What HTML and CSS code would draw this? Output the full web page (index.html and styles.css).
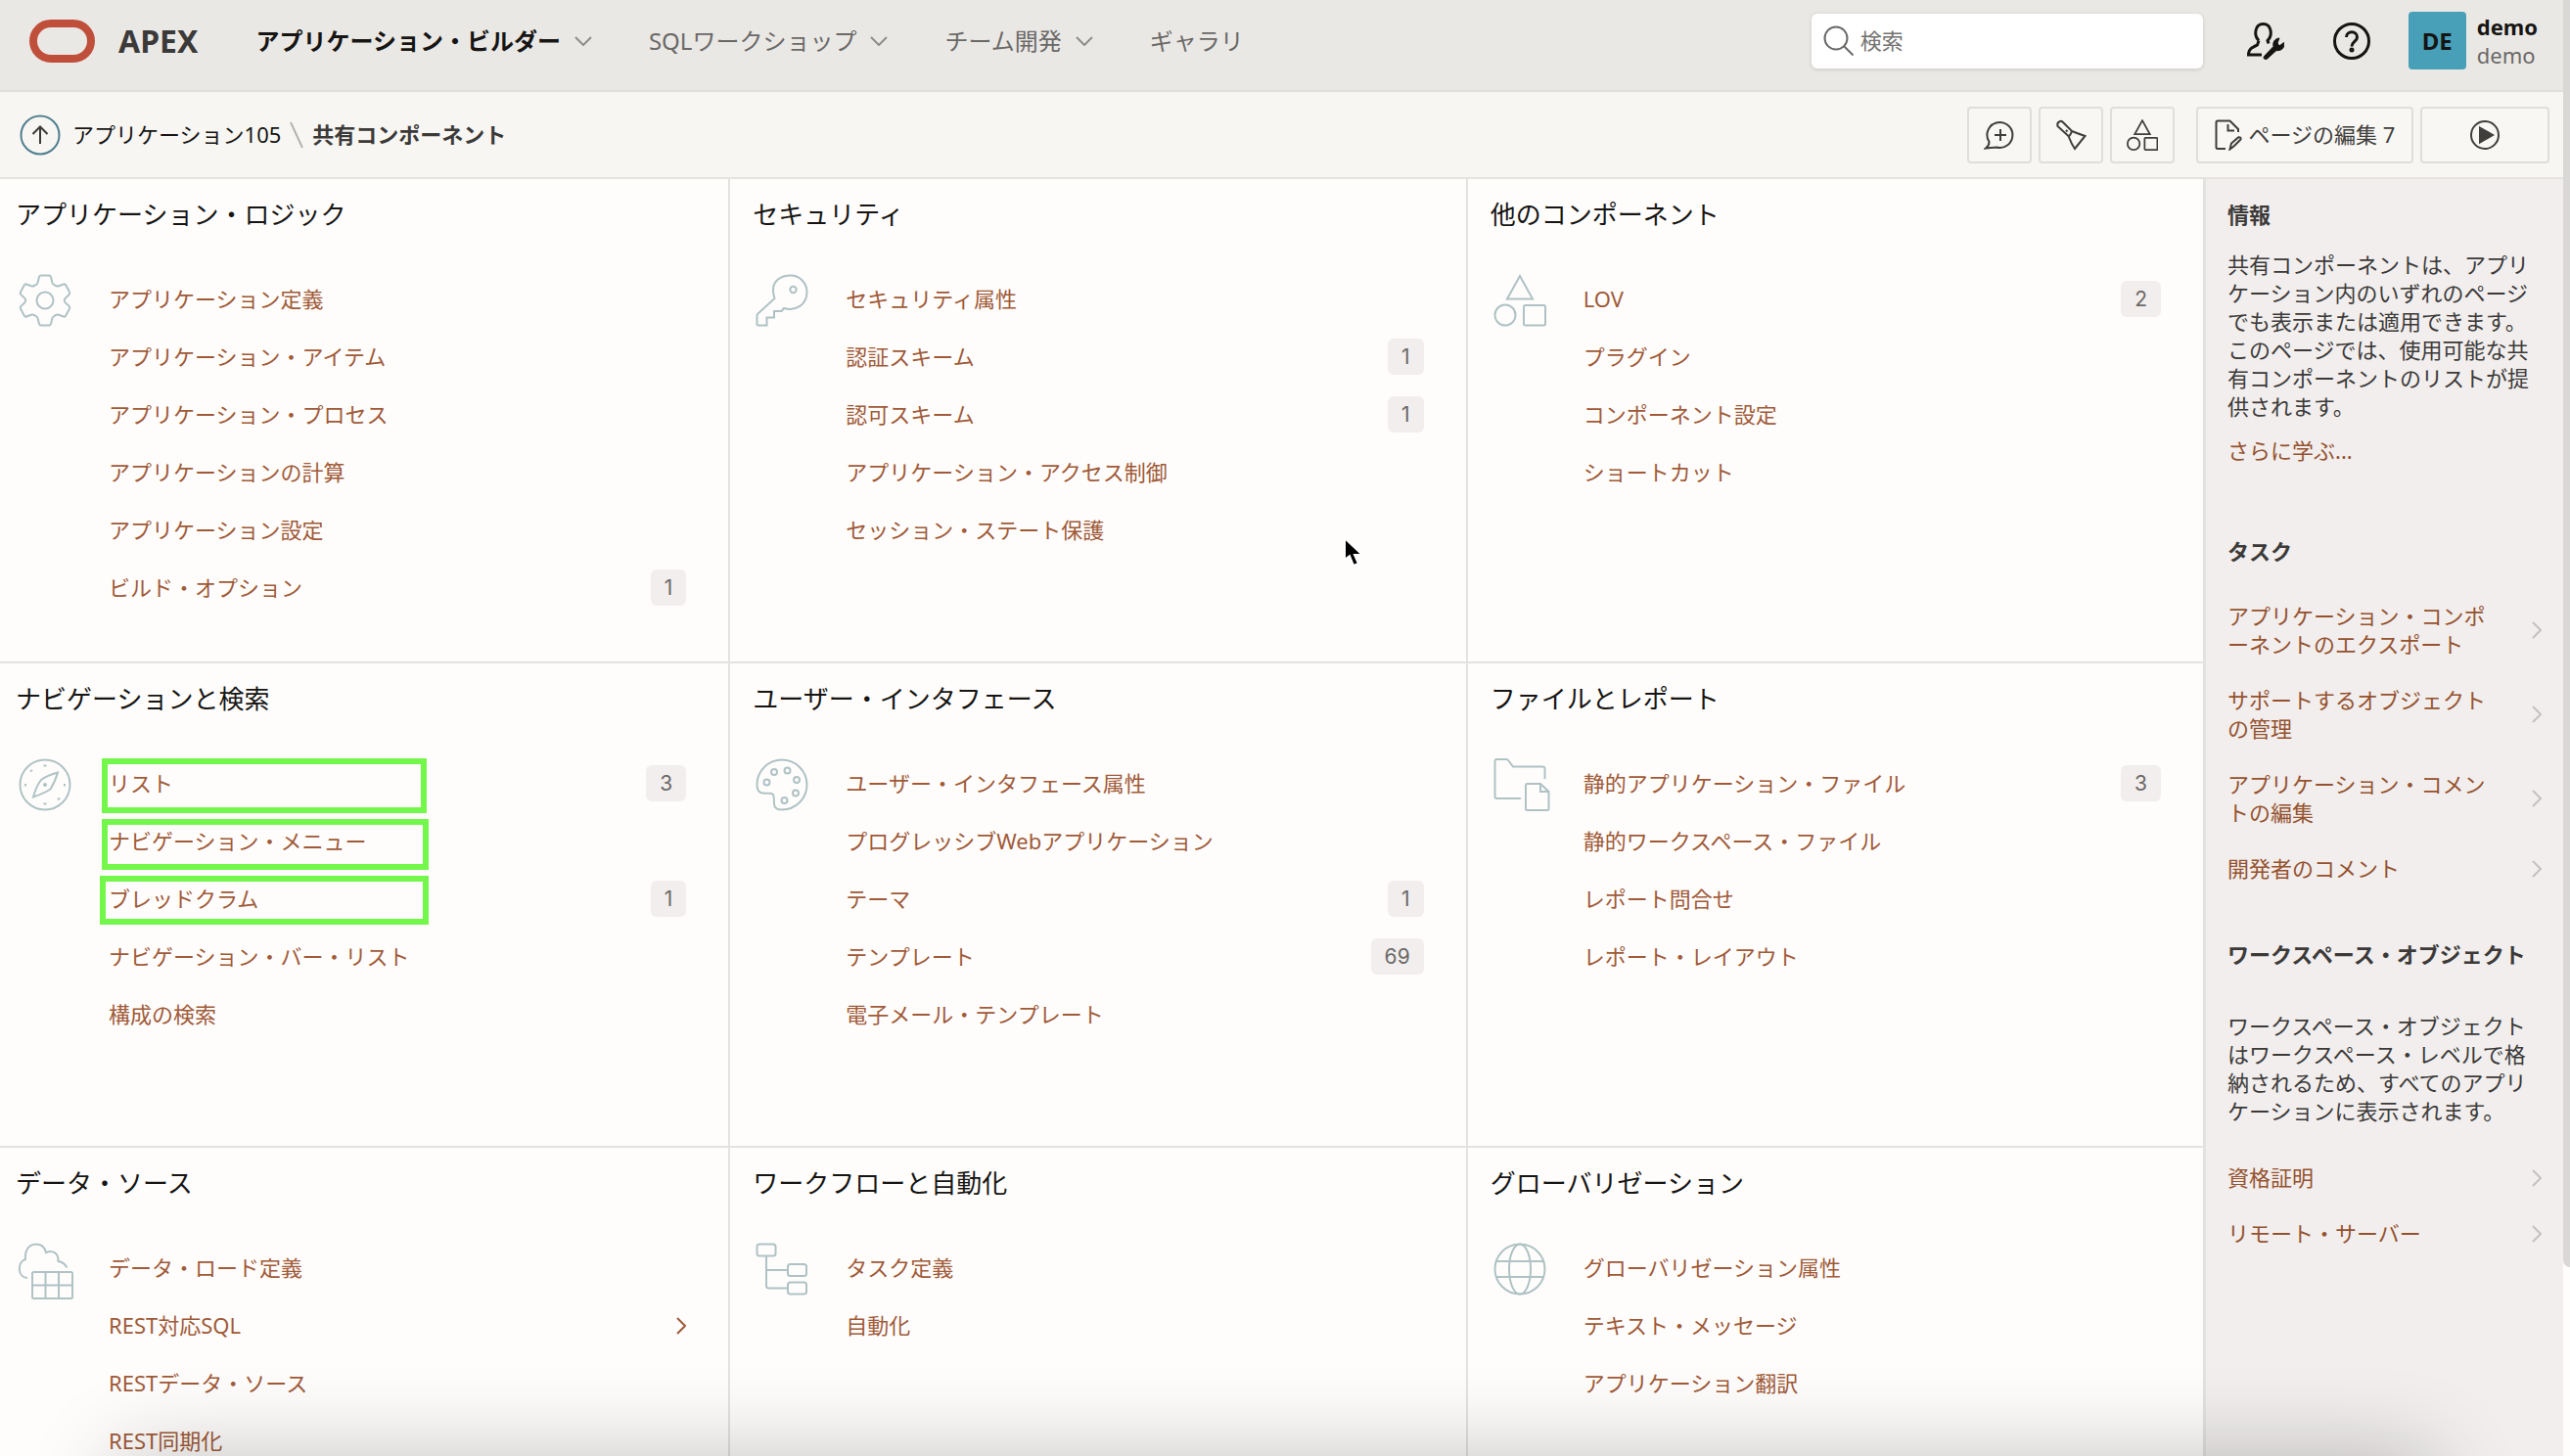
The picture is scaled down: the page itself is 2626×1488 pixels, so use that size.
FILE: index.html
```html
<!DOCTYPE html>
<html lang="ja">
<head>
<meta charset="utf-8">
<meta name="viewport" content="width=device-width, initial-scale=1">
<title>共有コンポーネント</title>
<link rel="stylesheet" href="styles.css">
</head>
<body>
<svg width="0" height="0" class="defs" aria-hidden="true">
  <symbol id="down" viewBox="0 0 18 10"><path d="M1 1l8 8 8-8"/></symbol>
  <symbol id="next" viewBox="0 0 10 18"><path d="M1 1l8 8-8 8"/></symbol>
  <symbol id="shapes" viewBox="0 0 54 54"><path d="M27 2L40 25.500H14zM31 33.500q0-1.500 1.500-1.500h19q1.500 0 1.500 1.500v17.500q0 1.500-1.500 1.500h-19q-1.500 0-1.500-1.500z"/><circle cx="12" cy="42" r="10.500"/></symbol>
</svg>
<div class="app">
  <header class="header">
    <a class="brand" href="#">
      <svg class="logo" viewBox="0 0 67 44"><rect x="4" y="4" width="59" height="36" rx="18"/></svg>
      <span>APEX</span>
    </a>
    <nav class="nav">
      <a class="nav-item current" href="#">アプリケーション・ビルダー<svg><use href="#down"/></svg></a>
      <a class="nav-item" href="#">SQLワークショップ<svg><use href="#down"/></svg></a>
      <a class="nav-item" href="#">チーム開発<svg><use href="#down"/></svg></a>
      <a class="nav-item" href="#">ギャラリ</a>
    </nav>
    <label class="search">
      <svg viewBox="0 0 32 32"><circle cx="13" cy="13" r="11.500"/><path d="M21 21l9.500 9.500"/></svg>
      <input type="search" placeholder="検索" aria-label="検索">
    </label>
    <button class="icon-button" aria-label="管理">
      <svg viewBox="0 0 38 38"><path d="M12 18.500C6.500 13 8 1.500 16.500 1.500S26.500 13 21 18.500l1 3M12 18.500l-1.500 4.500C5 25.500 1.500 27 1.500 33H15"/><path class="wrench" d="M37.500 20.500c1.500 5-2.500 9-7.500 8L20 37.500c-1.500 1-4-1-2.500-3L27 24.500c-1-4.500 1.500-8 6-8.500l-2 5 2 3z"/></svg>
    </button>
    <button class="icon-button" aria-label="ヘルプ">
      <svg viewBox="0 0 38 38"><circle cx="19" cy="19" r="17.500"/><path d="M13.500 15c0-7 11-7 11 0 0 4.500-5.500 4.500-5.500 9.500"/><circle class="solid" cx="19" cy="28" r="1"/></svg>
    </button>
    <a class="account" href="#">
      <span class="avatar">DE</span>
      <span class="names"><strong>demo</strong><span>demo</span></span>
    </a>
  </header>

  <div class="toolbar">
    <a class="up" href="#" aria-label="上へ"><svg viewBox="0 0 42 42"><circle cx="21" cy="21" r="19.500"/><path d="M21 30V13M13.500 20l7.500-7.500 7.500 7.500"/></svg></a>
    <nav class="crumbs">
      <a href="#">アプリケーション105</a>
      <svg viewBox="0 0 14 28"><path d="M1 1l12 26"/></svg>
      <strong>共有コンポーネント</strong>
    </nav>
    <div class="actions">
      <button aria-label="コメント"><svg viewBox="0 0 32 32"><path d="M5.500 23A13 13 0 1 1 13 28.500L2 29.500q3.500-2.500 3.500-6.500zM17 10v12M11 16h12"/></svg></button>
      <button aria-label="検索"><svg viewBox="0 0 32 32"><path d="M2.500 7Q1.500 3 5 2q2-.5 3 1l9 9q6 2.500 13.500 5L20 30q-3.500-5-6.500-13zM13.500 17.500q2-1 3.500-5.500M11 11l1.500 1.500"/></svg></button>
      <button aria-label="共有コンポーネント" class="shapes"><svg><use href="#shapes"/></svg></button>
    </div>
    <div class="actions">
      <button class="edit"><svg viewBox="0 0 28 32"><path d="M11 30H3q-1.500 0-1.500-1.500V3Q1.500 1.500 3 1.500h12.500L24 10v3M13.500 5v6.500H20M15.500 30.500l1.500-6 7-6q3-1 2.500 2l-7 7z"/></svg>ページの編集 7</button>
      <button class="run" aria-label="実行"><svg viewBox="0 0 32 32"><circle cx="16" cy="16" r="14"/><path class="solid" d="M11 8.500L24 16 11 23.500z"/></svg></button>
    </div>
  </div>

  <div class="body">
    <main class="cards">
      <section class="card">
        <h2>アプリケーション・ロジック</h2>
        <div class="card-body">
          <svg class="icon" viewBox="0 0 54 54"><path d="M23 1.500h8q1.500 0 2 1.500l1.500 6q.5 1.500 2 2.200l1.500.8q1.500.8 3 .3l5-1.800q1.500-.5 2.300 1l3.700 7q.8 1.500-.4 2.600l-4.200 4q-1.400 1.900 0 3.800l4.200 4q1.200 1.100.4 2.600l-3.700 7q-.8 1.500-2.300 1l-5-1.800q-1.500-.5-3 .3l-1.500.8q-1.500.7-2 2.200L33 51q-.5 1.500-2 1.500h-8q-1.500 0-2-1.500l-1.500-6q-.5-1.500-2-2.200L16 42q-1.500-.8-3-.3l-5 1.800q-1.500.5-2.300-1l-3.700-7q-.8-1.500.4-2.600l4.200-4q1.400-1.900 0-3.800l-4.200-4Q1.200 20 2 18.500l3.700-7q.8-1.500 2.300-1l5 1.800q1.500.5 3-.3l1.500-.8q1.500-.7 2-2.200L21 3q.5-1.500 2-1.500z"/><circle cx="27" cy="27" r="8.500"/></svg>
          <ul>
            <li><a href="#">アプリケーション定義</a></li>
            <li><a href="#">アプリケーション・アイテム</a></li>
            <li><a href="#">アプリケーション・プロセス</a></li>
            <li><a href="#">アプリケーションの計算</a></li>
            <li><a href="#">アプリケーション設定</a></li>
            <li><a href="#">ビルド・オプション</a><span class="badge">1</span></li>
          </ul>
        </div>
      </section>
      <section class="card">
        <h2>セキュリティ</h2>
        <div class="card-body">
          <svg class="icon" viewBox="0 0 54 54"><path d="M19.500 25C13 5 29 1.500 36 1.500c9 0 16.500 7.500 16.500 17 0 13-11.500 20-23.500 16.500l-2.500 3H19v6.500h-7.500v8h-9q-1 0-1-1v-9q0-1 1-2z"/><circle cx="38.500" cy="16" r="3.200"/></svg>
          <ul>
            <li><a href="#">セキュリティ属性</a></li>
            <li><a href="#">認証スキーム</a><span class="badge">1</span></li>
            <li><a href="#">認可スキーム</a><span class="badge">1</span></li>
            <li><a href="#">アプリケーション・アクセス制御</a></li>
            <li><a href="#">セッション・ステート保護</a></li>
          </ul>
        </div>
      </section>
      <section class="card">
        <h2>他のコンポーネント</h2>
        <div class="card-body">
          <svg class="icon"><use href="#shapes"/></svg>
          <ul>
            <li><a href="#">LOV</a><span class="badge">2</span></li>
            <li><a href="#">プラグイン</a></li>
            <li><a href="#">コンポーネント設定</a></li>
            <li><a href="#">ショートカット</a></li>
          </ul>
        </div>
      </section>
      <section class="card">
        <h2>ナビゲーションと検索</h2>
        <div class="card-body">
          <svg class="icon" viewBox="0 0 54 54"><circle cx="27" cy="27" r="25.500"/><path d="M40 14.500q-3 10-7.500 17-6 4-17.500 8 3-11 8-17.500 7-5 17-7.500zM7 26v2.500M47 26v2.500M25.500 7.500h3M25.500 46.500h3M12 13.500l2-1.500M40 42.500l2-2"/><circle cx="27" cy="27" r="1"/></svg>
          <ul>
            <li><a href="#">リスト</a><span class="badge">3</span><i class="mark mark-list"></i></li>
            <li><a href="#">ナビゲーション・メニュー</a><i class="mark mark-menu"></i></li>
            <li><a href="#">ブレッドクラム</a><span class="badge">1</span><i class="mark mark-crumb"></i></li>
            <li><a href="#">ナビゲーション・バー・リスト</a></li>
            <li><a href="#">構成の検索</a></li>
          </ul>
        </div>
      </section>
      <section class="card">
        <h2>ユーザー・インタフェース</h2>
        <div class="card-body">
          <svg class="icon" viewBox="0 0 54 54"><path d="M27 1.500a25.500 25.500 0 0 1 0 51c-13 0-5.500-12-9.500-16C14 33.500 1.500 40.500 1.500 27A25.500 25.500 0 0 1 27 1.500z"/><circle cx="19" cy="14" r="3"/><circle cx="32.500" cy="12.500" r="3"/><circle cx="42" cy="22" r="3"/><circle cx="11.500" cy="24.500" r="3"/><circle cx="41" cy="35.500" r="3"/><circle cx="29.500" cy="43" r="3"/></svg>
          <ul>
            <li><a href="#">ユーザー・インタフェース属性</a></li>
            <li><a href="#">プログレッシブWebアプリケーション</a></li>
            <li><a href="#">テーマ</a><span class="badge">1</span></li>
            <li><a href="#">テンプレート</a><span class="badge">69</span></li>
            <li><a href="#">電子メール・テンプレート</a></li>
          </ul>
        </div>
      </section>
      <section class="card">
        <h2>ファイルとレポート</h2>
        <div class="card-body">
          <svg class="icon" viewBox="0 0 54 54"><path d="M28 41H3.500q-2 0-2-2V3q0-2 2-2H13q1.500 0 2.500 1.500L20 8.500h30.500q2 0 2 2V21M33 27.500q0-1.500 1.500-1.500H48l8.500 8v17.500q0 1.500-1.500 1.500H34.500q-1.500 0-1.500-1.500zM48 26v8h8.500"/></svg>
          <ul>
            <li><a href="#">静的アプリケーション・ファイル</a><span class="badge">3</span></li>
            <li><a href="#">静的ワークスペース・ファイル</a></li>
            <li><a href="#">レポート問合せ</a></li>
            <li><a href="#">レポート・レイアウト</a></li>
          </ul>
        </div>
      </section>
      <section class="card">
        <h2>データ・ソース</h2>
        <div class="card-body">
          <svg class="icon" viewBox="0 0 54 54"><path d="M9 36C-1 36-2 20 7 17 6 6 12 1.500 18 1.500q8 0 10 8.500c7-3 13 1 12.500 9q6 1 9 6.500M14 31.500q0-1.500 1.500-1.500h38q1.500 0 1.500 1.500v24q0 1.500-1.500 1.500h-38q-1.500 0-1.500-1.500zM14 43.500h41M27.500 30v27M41 30v27"/></svg>
          <ul>
            <li><a href="#">データ・ロード定義</a></li>
            <li><a href="#">REST対応SQL</a><svg class="more"><use href="#next"/></svg></li>
            <li><a href="#">RESTデータ・ソース</a></li>
            <li><a href="#">REST同期化</a></li>
          </ul>
        </div>
      </section>
      <section class="card">
        <h2>ワークフローと自動化</h2>
        <div class="card-body">
          <svg class="icon" viewBox="0 0 54 54"><rect x="1.500" y="1.500" width="19" height="12" rx="2.500"/><rect x="33" y="22" width="19" height="12" rx="2.500"/><rect x="33" y="40.500" width="19" height="12" rx="2.500"/><path d="M11 13.500V44q0 2.500 2.500 2.500H33M11 28h22"/></svg>
          <ul>
            <li><a href="#">タスク定義</a></li>
            <li><a href="#">自動化</a></li>
          </ul>
        </div>
      </section>
      <section class="card">
        <h2>グローバリゼーション</h2>
        <div class="card-body">
          <svg class="icon" viewBox="0 0 54 54"><circle cx="27" cy="27" r="25.500"/><ellipse cx="27" cy="27" rx="11" ry="25.500"/><path d="M3 19h48M3 35h48"/></svg>
          <ul>
            <li><a href="#">グローバリゼーション属性</a></li>
            <li><a href="#">テキスト・メッセージ</a></li>
            <li><a href="#">アプリケーション翻訳</a></li>
          </ul>
        </div>
      </section>
    </main>

    <aside class="side">
      <section>
        <h3>情報</h3>
        <p>共有コンポーネントは、アプリケーション内のいずれのページでも表示または適用できます。このページでは、使用可能な共有コンポーネントのリストが提供されます。</p>
        <a class="learn" href="#">さらに学ぶ...</a>
      </section>
      <section>
        <h3>タスク</h3>
        <ul>
          <li><a href="#">アプリケーション・コンポーネントのエクスポート</a><svg><use href="#next"/></svg></li>
          <li><a href="#">サポートするオブジェクトの管理</a><svg><use href="#next"/></svg></li>
          <li><a href="#">アプリケーション・コメントの編集</a><svg><use href="#next"/></svg></li>
          <li><a href="#">開発者のコメント</a><svg><use href="#next"/></svg></li>
        </ul>
      </section>
      <section>
        <h3>ワークスペース・オブジェクト</h3>
        <p>ワークスペース・オブジェクトはワークスペース・レベルで格納されるため、すべてのアプリケーションに表示されます。</p>
        <ul>
          <li><a href="#">資格証明</a><svg><use href="#next"/></svg></li>
          <li><a href="#">リモート・サーバー</a><svg><use href="#next"/></svg></li>
        </ul>
      </section>
    </aside>
  </div>
</div>
<div class="scroll-thumb"></div>
<div class="dock-shadow"></div>
<svg class="pointer" viewBox="0 0 22 32"><path d="M2 2v22l5-4 4 10 5-2-4-9h8z"/></svg>
</body>
</html>
```
FILE: styles.css
```css
* { box-sizing: border-box; }

body {
  margin: 0;
  height: 100vh;
  overflow: hidden;
  position: relative;
  background: #fefdfc;
  color: #3c3a39;
  font: 22px/29px "Noto Sans", "Noto Sans CJK JP", sans-serif;
}

a { color: inherit; text-decoration: none; }
ul { list-style: none; margin: 0; padding: 0; }
h2, h3, p { margin: 0; }
button, input { font: inherit; color: inherit; }
svg { fill: none; stroke: currentColor; stroke-width: 2; flex: none; }
.defs { position: absolute; }
.solid { fill: currentColor; }

.app { height: 100%; margin-right: 7px; display: flex; flex-direction: column; }

/* Header */
.header {
  display: flex;
  align-items: center;
  flex: none;
  height: 94px;
  padding: 0 26px 9px 30px;
  background: #eae8e5;
  border-bottom: 2px solid #e1dfdc;
}
.brand { display: flex; align-items: center; gap: 24px; font-size: 32px; font-weight: 700; }
.logo { width: 67px; height: 44px; color: #bf4f3b; stroke-width: 8; }
.nav { display: flex; align-items: center; gap: 58px; margin-left: 59px; font-size: 24px; color: #6b6967; }
.nav-item { display: flex; align-items: center; gap: 14px; white-space: nowrap; }
.nav-item svg { width: 18px; height: 10px; color: #8f8d8b; }
.current { color: #161513; font-weight: 700; }
.search {
  display: flex;
  align-items: center;
  gap: 6px;
  width: 400px;
  height: 56px;
  margin-left: auto;
  padding: 0 12px;
  background: #fff;
  border-radius: 6px;
  box-shadow: 0 1px 4px rgba(0, 0, 0, .14);
  color: #6b6967;
}
.search svg { width: 32px; height: 32px; }
.search input { flex: 1; min-width: 0; border: 0; padding: 0; background: none; outline: 0; }
.search input::placeholder { color: #757371; opacity: 1; }
.icon-button { margin-left: 45px; padding: 0; border: 0; background: none; display: flex; color: #161513; }
.icon-button svg { width: 38px; height: 38px; stroke-width: 3; }
.icon-button + .icon-button { margin-left: 50px; }
.wrench { fill: currentColor; stroke-width: 1; }
.account { display: flex; align-items: center; gap: 11px; margin-left: 39px; }
.avatar {
  width: 59px;
  height: 59px;
  display: grid;
  place-items: center;
  border-radius: 4px;
  background: #47a0b8;
  color: #161513;
  font-size: 24px;
  font-weight: 700;
}
.names { display: flex; flex-direction: column; color: #6b6967; }
.names strong { color: #161513; }

/* Breadcrumb and page actions */
.toolbar {
  display: flex;
  align-items: center;
  flex: none;
  height: 89px;
  padding: 0 14px 0 20px;
  background: #f7f6f2;
  border-bottom: 2px solid #e5e3e0;
}
.up { color: #3c3a39; display: flex; }
.up svg { width: 42px; height: 42px; }
.up circle { stroke: #4f7f8e; }
.crumbs { display: flex; align-items: center; gap: 9px; margin: 0 auto 0 12px; color: #161513; }
.crumbs svg { width: 14px; height: 28px; color: #b5b3b0; }
.crumbs strong { color: #3c3a39; }
.actions { display: flex; gap: 7px; margin-left: 22px; }
.actions button {
  display: flex;
  align-items: center;
  justify-content: center;
  gap: 7px;
  width: 66px;
  height: 58px;
  padding: 0;
  background: #f8f7f3;
  border: 2px solid #e0deda;
  border-radius: 4px;
  color: #403e3c;
}
.actions svg { width: 32px; height: 32px; }
.actions .shapes svg { stroke-width: 3; }
.actions .edit { width: 222px; }
.actions .edit svg { width: 28px; }
.actions .run { width: 132px; }

/* Component cards */
.body { flex: 1; min-height: 0; display: flex; overflow: hidden; align-items: stretch; }
.cards {
  flex: 1;
  display: grid;
  grid-template-columns: repeat(3, 1fr);
  grid-auto-rows: 495px;
  margin-left: -7px;
}
.card { padding: 18px 43px 0 23px; border: 0 solid #e4e2e0; border-width: 0 2px 2px 0; }
.card h2 { color: #161513; font-size: 26px; font-weight: 400; line-height: 36px; }
.card-body { display: flex; gap: 38px; padding: 39px 0 0 3px; }
.icon { width: 54px; height: 54px; margin-top: 4px; overflow: visible; color: #afc2c4; }
.card ul { flex: 1; color: #a05a38; }
.card li { position: relative; display: flex; align-items: center; justify-content: space-between; height: 59px; }
.badge {
  padding: 4px 14px;
  background: #f1eeed;
  border-radius: 6px;
  color: #6b6967;
  font-family: Inter, sans-serif;
  font-size: 21px;
}
.more { width: 10px; height: 18px; }
.mark { position: absolute; border: 6px solid #73f74b; }
.mark-list { left: -7px; top: 4px; width: 332px; height: 56px; }
.mark-menu { left: -7px; top: 7px; width: 334px; height: 52px; }
.mark-crumb { left: -9px; top: 6px; width: 336px; height: 50px; }

/* Side column */
.side {
  width: 366px;
  flex: none;
  padding: 22px;
  background: #f1eeed;
  border-left: 1px solid #e4e2e0;
  line-break: loose;
}
.side section + section { margin-top: 74px; }
.side section:last-child { margin-top: 45px; }
.side h3 { font-size: 22px; }
.side p { margin-top: 22px; }
.side a { color: #95522f; }
.learn { display: block; margin-top: 16px; }
.side ul { margin-top: 23px; }
.side li { display: flex; align-items: center; justify-content: space-between; padding: 14px 0; }
.side li a { max-width: 270px; }
.side li svg { width: 10px; height: 18px; color: #c4c2c0; }
.side section:last-child p { margin-top: 44px; }
.side section:last-child ul { margin-top: 25px; }

/* Overlays */
.scroll-thumb {
  position: absolute;
  top: 0;
  right: 0;
  width: 7px;
  height: 87%;
  background: #d9d8d7;
  border-bottom-left-radius: 7px;
}
.dock-shadow {
  position: absolute;
  left: 120px;
  right: 140px;
  top: 100%;
  height: 100px;
  box-shadow: 0 0 90px rgba(0, 0, 0, .24);
  pointer-events: none;
}
.pointer { position: absolute; left: 52.250%; top: 36.800%; width: 22px; height: 32px; stroke: #fff; fill: #000; }
```
